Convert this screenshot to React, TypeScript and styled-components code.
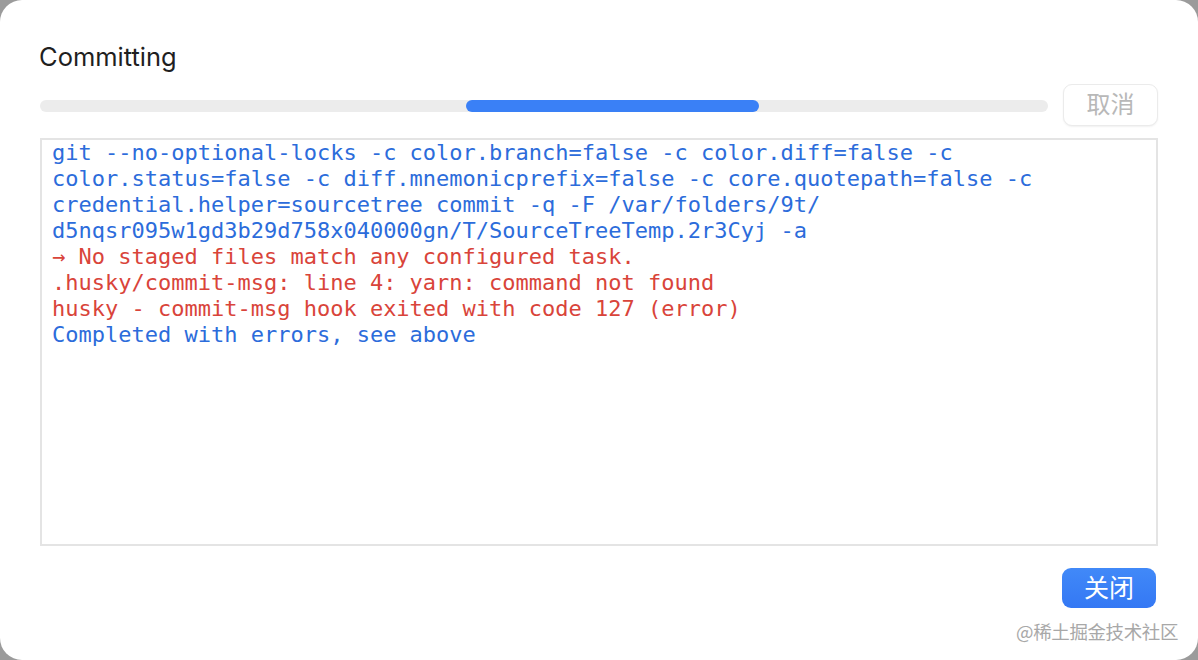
import React from 'react'
import styled, { createGlobalStyle } from 'styled-components'

const GlobalStyle = createGlobalStyle`
  html, body {
    margin: 0;
    padding: 0;
    background: #9b9b9b;
  }
  #root {
    width: 1198px;
    height: 660px;
  }
`

type LogLine = { text: string; tone: 'info' | 'error' }

const lines: LogLine[] = [
  { text: 'git --no-optional-locks -c color.branch=false -c color.diff=false -c', tone: 'info' },
  { text: 'color.status=false -c diff.mnemonicprefix=false -c core.quotepath=false -c', tone: 'info' },
  { text: 'credential.helper=sourcetree commit -q -F /var/folders/9t/', tone: 'info' },
  { text: 'd5nqsr095w1gd3b29d758x040000gn/T/SourceTreeTemp.2r3Cyj -a', tone: 'info' },
  { text: '→ No staged files match any configured task.', tone: 'error' },
  { text: '.husky/commit-msg: line 4: yarn: command not found', tone: 'error' },
  { text: 'husky - commit-msg hook exited with code 127 (error)', tone: 'error' },
  { text: 'Completed with errors, see above', tone: 'info' },
]

const App: React.FC = () => {
  const progress = { start: 42.3, width: 29 }

  return (
    <>
      <GlobalStyle />
      <Dialog>
        <Title>Committing</Title>

        <ProgressRow>
          <Track>
            <Fill style={{ left: `${progress.start}%`, width: `${progress.width}%` }} />
          </Track>
          <CancelButton disabled>取消</CancelButton>
        </ProgressRow>

        <LogBox>
          {lines.map((l, i) => (
            <Line key={i} tone={l.tone}>
              {l.text}
            </Line>
          ))}
        </LogBox>

        <Footer>
          <CloseButton>关闭</CloseButton>
        </Footer>

        <Watermark>@稀土掘金技术社区</Watermark>
      </Dialog>
    </>
  )
}

export default App

const Dialog = styled.div`
  position: relative;
  box-sizing: border-box;
  width: 1198px;
  height: 660px;
  background: #ffffff;
  border-radius: 22px;
  padding: 41px 40px 0 40px;
  display: flex;
  flex-direction: column;
  font-family: Inter, 'Noto Sans', 'Noto Sans CJK SC', sans-serif;
`

const Title = styled.div`
  font-size: 25.5px;
  color: #1f1f1f;
  line-height: 31px;
  margin-left: -1px;
`

const ProgressRow = styled.div`
  display: flex;
  align-items: center;
  gap: 15px;
  margin-top: 12px;
`

const Track = styled.div`
  position: relative;
  flex: 1;
  height: 12px;
  margin-top: 2px;
  border-radius: 6px;
  background: #ececec;
  overflow: hidden;
`

const Fill = styled.div`
  position: absolute;
  top: 0;
  bottom: 0;
  border-radius: 6px;
  background: #3a80f6;
`

const CancelButton = styled.button`
  box-sizing: border-box;
  width: 95px;
  height: 42px;
  border: 1px solid #ebebeb;
  border-radius: 9px;
  background: #fff;
  box-shadow: 0 1px 2px rgba(0, 0, 0, 0.06);
  color: #b8b8b8;
  font-size: 24px;
  font-family: 'Noto Sans CJK SC', sans-serif;
  line-height: 1;
  padding: 0 0 4px 0;
`

const LogBox = styled.div`
  box-sizing: border-box;
  margin-top: 12px;
  height: 408px;
  border: 2px solid #e4e4e4;
  padding: 0 10px;
  font-family: 'DejaVu Sans Mono', 'Liberation Mono', monospace;
  font-size: 22px;
  line-height: 26px;
  white-space: pre;
`

const Line = styled.div<{ tone: 'info' | 'error' }>`
  color: ${(p) => (p.tone === 'error' ? '#d9443a' : '#2c6cdb')};
`

const Footer = styled.div`
  display: flex;
  justify-content: flex-end;
  margin-top: 22px;
  padding-right: 2px;
`

const CloseButton = styled.button`
  box-sizing: border-box;
  width: 94px;
  height: 40px;
  border: none;
  border-radius: 9px;
  background: linear-gradient(180deg, #4189f8 0%, #3478f4 100%);
  color: #ffffff;
  font-size: 25px;
  font-family: 'Noto Sans CJK SC', sans-serif;
  line-height: 1;
  padding: 0 0 4px 0;
`

const Watermark = styled.div`
  position: absolute;
  right: 20px;
  bottom: 16px;
  font-size: 18.5px;
  color: #a8a8a8;
  font-family: 'Noto Sans CJK SC', sans-serif;
  letter-spacing: -0.4px;
`
